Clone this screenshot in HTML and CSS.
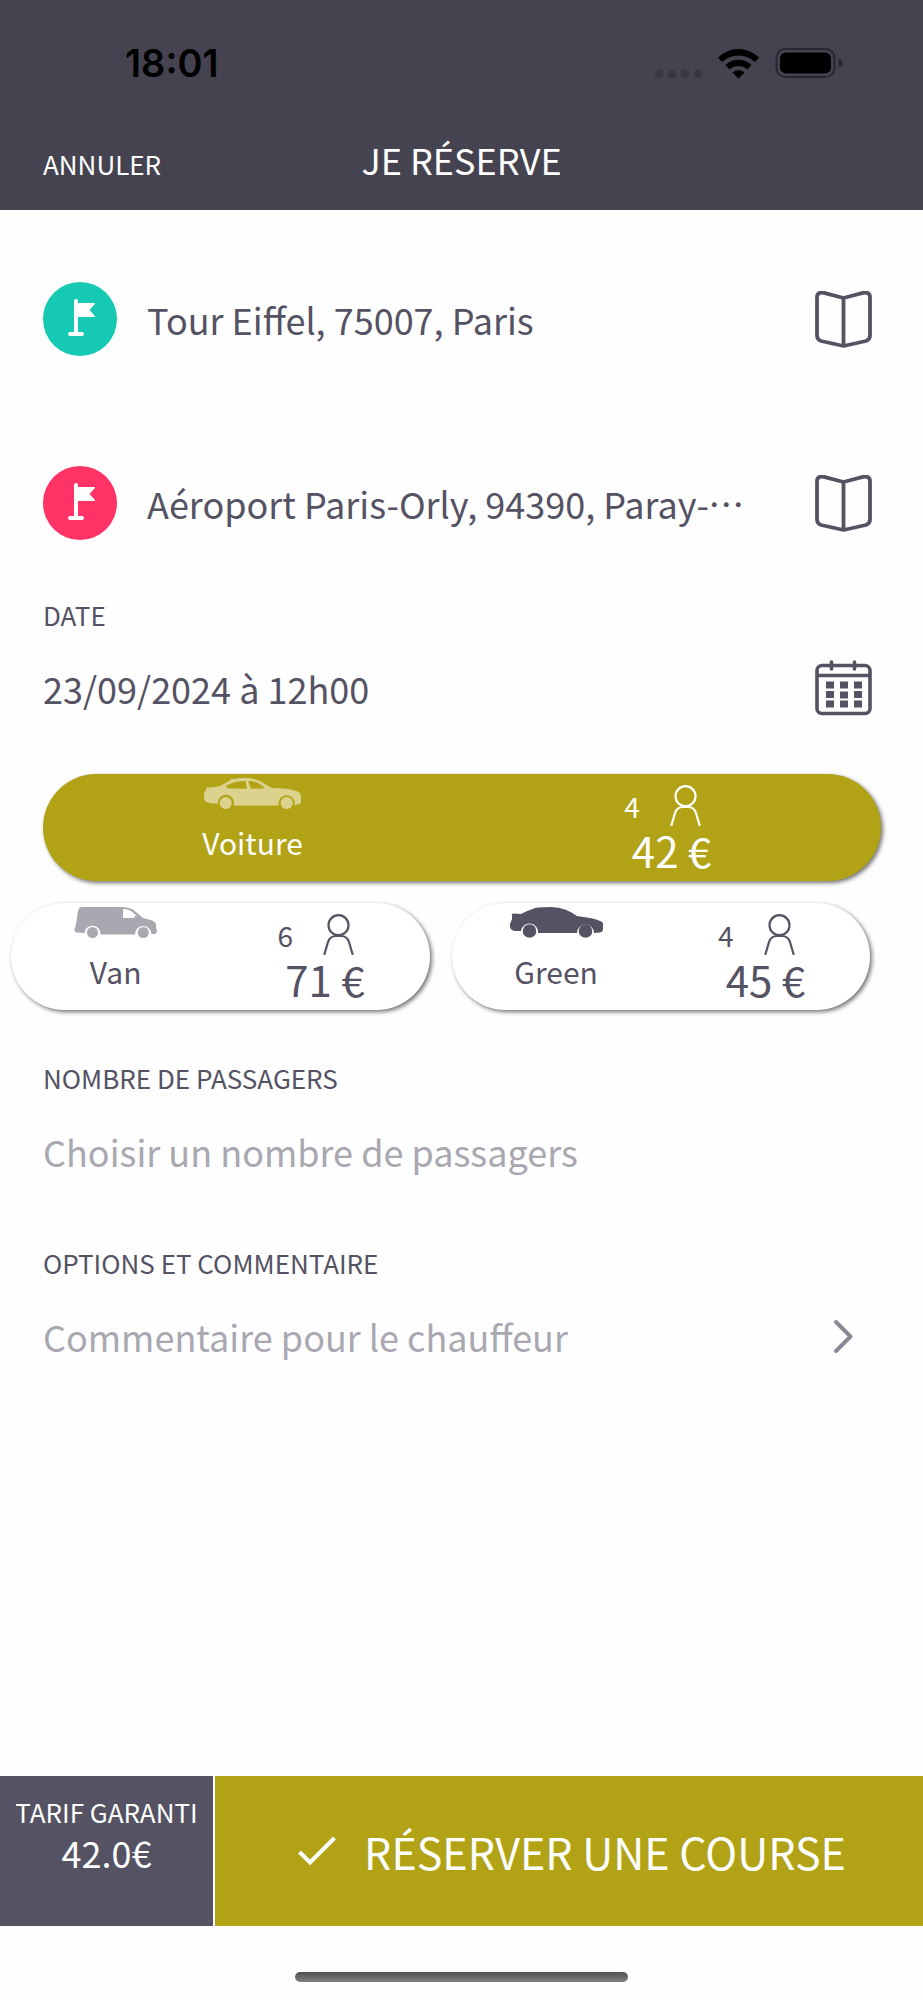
FILE: index.html
```html
<!DOCTYPE html>
<html lang="fr">
<head>
<meta charset="utf-8">
<meta name="viewport" content="width=device-width, initial-scale=1">
<title>Je réserve</title>
<link rel="stylesheet" href="styles.css">
</head>
<body>
<svg class="sprite" aria-hidden="true">
  <symbol id="flag" viewBox="0 0 74 74">
    <path fill="currentColor" d="M31 19q0-2 2-2t2 2v2h16.500q1 0.500 0 1.500l-5 5.500 5 5.500q1 1.500 0 1.500H35v15h4q2 0 2 2t-2 2H27q-2 0-2-2t2-2h4z"/>
  </symbol>
  <symbol id="book" viewBox="0 0 57 57">
    <path fill="none" stroke="currentColor" stroke-width="3.800" stroke-linejoin="round" d="M28.500 7 9 1.900Q2 .5 2 6.500v38q0 4 4 5.500l22.500 5 22.500-5q4-1.500 4-5.500V6.500q0-6-7-4.600zV55"/>
  </symbol>
  <symbol id="person" viewBox="0 0 31 41">
    <g fill="none" stroke="currentColor" stroke-width="2.200" stroke-linecap="round">
      <circle cx="15.500" cy="11.200" r="10"/>
      <path d="M1.500 40 5 28q2-6 8-6h5q6 0 8 6l3.500 12"/>
    </g>
  </symbol>
</svg>

<header class="header">
  <div class="status">
    <span class="time">18:01</span>
    <svg class="status-icons" viewBox="0 0 190 32" aria-hidden="true">
      <g fill="#383742"><rect x="0" y="23" width="8" height="8" rx="3"/><rect x="13" y="23" width="8" height="8" rx="3"/><rect x="26" y="23" width="8" height="8" rx="3"/><rect x="39" y="23" width="8" height="8" rx="3"/></g>
      <path d="M63 10.500a29 29 0 0 1 41 0l-4 4.500a24 24 0 0 0-33 0zM70.500 18a19 19 0 0 1 26 0l-4.200 4.500a13 13 0 0 0-17.600 0zM77.500 25.500a9 9 0 0 1 12 0L83.500 31.500z"/>
      <rect x="121.500" y="2" width="58" height="28" rx="9" fill="none" stroke="#282730" stroke-width="2"/>
      <rect x="125" y="5.500" width="51" height="21" rx="6"/>
      <path fill="#282730" d="M183.500 11.500q4 1 4 4.500t-4 4.500z"/>
    </svg>
  </div>
  <nav class="nav">
    <button class="cancel" type="button">ANNULER</button>
    <h1 class="title">JE RÉSERVE</h1>
  </nav>
</header>

<main class="main">
  <div class="row">
    <span class="badge badge-from"><svg viewBox="0 0 74 74" aria-hidden="true"><use href="#flag"/></svg></span>
    <input class="value" type="text" aria-label="Adresse de départ" value="Tour Eiffel, 75007, Paris">
    <button class="icon-btn" type="button" aria-label="Carnet d'adresses, départ"><svg class="icon" viewBox="0 0 57 57"><use href="#book"/></svg></button>
  </div>
  <div class="row row-to">
    <span class="badge badge-to"><svg viewBox="0 0 74 74" aria-hidden="true"><use href="#flag"/></svg></span>
    <input class="value" type="text" aria-label="Adresse d'arrivée" value="Aéroport Paris-Orly, 94390, Paray-Vieille-Poste">
    <button class="icon-btn" type="button" aria-label="Carnet d'adresses, arrivée"><svg class="icon" viewBox="0 0 57 57"><use href="#book"/></svg></button>
  </div>

  <div class="field">
    <label class="label" for="date">DATE</label>
    <div class="row">
      <input class="value" id="date" type="text" value="23/09/2024 à 12h00">
      <button class="icon-btn" type="button" aria-label="Ouvrir le calendrier">
        <svg class="icon" viewBox="0 0 57 57">
          <g fill="none" stroke="currentColor" stroke-width="3.600" stroke-linecap="round"><rect x="2" y="5.500" width="53" height="48" rx="5"/><path d="M3 15.500h51M16.500 2v7M39.500 2v7"/></g>
          <path fill="currentColor" d="M11 21.500h8v7h-8zM25 21.500h8v7h-8zM39 21.500h8v7h-8zM11 31h8v7h-8zM25 31.500h8v7h-8zM39 31h8v7h-8zM11 40.500h8v7h-8zM25 40.500h8v7h-8zM39 40.500h8v7h-8z"/>
        </svg>
      </button>
    </div>
  </div>

  <div class="vehicles" role="radiogroup" aria-label="Type de véhicule">
    <label class="card">
      <input class="radio" type="radio" name="vehicle" checked>
      <span class="kind">
        <svg class="car car-sedan" viewBox="0 0 97 31" aria-hidden="true">
          <path fill-rule="evenodd" d="M2 24Q0 22 0 19V15L2 12 2 9.500Q9 9.500 16 8L26 2.500 27 1 30 1Q35 0 41 0 50 0 56 3L68 10 80 10.500Q92 12 96 15L97 18V24L96 26 91 27 90.500 27A8 8 0 1 0 75 27.500H29.500A8 8 0 1 0 14 25.500L8 25.500zM22 8Q22 10 27 10.500L43 10.800 41.500 3Q30 3 22 8zM44 3 47 10.800 61 10.500Q55 3 44 3z"/>
          <circle cx="21.700" cy="25" r="6"/><circle cx="82.700" cy="25" r="6"/>
        </svg>
        <span class="name">Voiture</span>
      </span>
      <span class="offer">
        <span class="seats">4 <svg class="person" viewBox="0 0 31 41" aria-hidden="true"><use href="#person"/></svg></span>
        <span class="price">42 €</span>
      </span>
    </label>
    <div class="pair">
      <label class="card">
        <input class="radio" type="radio" name="vehicle">
        <span class="kind">
          <svg class="car car-van" viewBox="0 0 83 31" aria-hidden="true">
            <path fill-rule="evenodd" d="M4 4Q5 0 8 0H49Q54 0 59 2.500L69 11 77 13Q82 15 82 18V22L83 23V25L81 27 77.500 27A8 8 0 1 0 61 27.500H26.500A8 8 0 1 0 10.500 26L2 25.500 0 23 1 21 2 17zM49 2V11L60 11 61 9 63 9 57 4Q54 2 49 2z"/>
            <circle cx="18.500" cy="25.500" r="5.500"/><circle cx="69.300" cy="25.500" r="5.500"/>
          </svg>
          <span class="name">Van</span>
        </span>
        <span class="offer">
          <span class="seats">6 <svg class="person" viewBox="0 0 31 41" aria-hidden="true"><use href="#person"/></svg></span>
          <span class="price">71 €</span>
        </span>
      </label>
      <label class="card">
        <input class="radio" type="radio" name="vehicle">
        <span class="kind">
          <svg class="car car-green" viewBox="0 0 93 31" aria-hidden="true">
            <path d="M2 8Q1 7 3 6.500L11 7Q23 1 28 .5 34 0 41 0 49 0 55 2.500 62 5 67 9L80 11Q90 13 93 16V23Q92 25 90 25.500L84 26A8.500 8.500 0 1 0 67 26H28A8.500 8.500 0 1 0 11 24H6Q1 24 0 20V17L2 12z"/>
            <circle cx="19.500" cy="24" r="6.800"/><circle cx="75.500" cy="24" r="6.800"/>
          </svg>
          <span class="name">Green</span>
        </span>
        <span class="offer">
          <span class="seats">4 <svg class="person" viewBox="0 0 31 41" aria-hidden="true"><use href="#person"/></svg></span>
          <span class="price">45 €</span>
        </span>
      </label>
    </div>
  </div>

  <div class="field">
    <label class="label" for="passengers">NOMBRE DE PASSAGERS</label>
    <div class="row">
      <select class="value empty" id="passengers">
        <option>Choisir un nombre de passagers</option>
      </select>
    </div>
  </div>
  <div class="field">
    <label class="label" for="comment">OPTIONS ET COMMENTAIRE</label>
    <div class="row">
      <input class="value" id="comment" type="text" placeholder="Commentaire pour le chauffeur">
      <button class="icon-btn" type="button" aria-label="Ouvrir les options">
        <svg class="icon chevron" viewBox="0 0 57 57"><path fill="none" stroke="currentColor" stroke-width="4" stroke-linecap="round" stroke-linejoin="round" d="M21 14 35.500 28.500 21 43"/></svg>
      </button>
    </div>
  </div>
</main>

<footer class="footer">
  <div class="fare">
    <span class="fare-label">TARIF GARANTI</span>
    <span class="fare-value">42.0€</span>
  </div>
  <button class="book" type="button">
    <svg class="check" viewBox="0 0 38 30" aria-hidden="true"><path fill="none" stroke="currentColor" stroke-width="4" d="M1.500 16 12 26.500 36.500 2"/></svg>
    RÉSERVER UNE COURSE
  </button>
</footer>
<div class="home"><span class="home-bar"></span></div>
</body>
</html>
```

FILE: styles.css
```css
* {
  box-sizing: border-box;
}

body {
  margin: 0;
  min-height: 100vh;
  display: flex;
  flex-direction: column;
  background: #fefefe;
  color: #545263;
  font-family: "Noto Sans CJK JP", "Noto Sans", sans-serif;
  font-size: 36px;
}

button,
input,
select {
  margin: 0;
  padding: 0;
  border: 0;
  background: none;
  color: inherit;
  font: inherit;
}

.sprite {
  display: none;
}

.header {
  padding: 40px 43px 24px;
  background: #454350;
  color: #fff;
}

.status {
  display: flex;
  align-items: center;
  justify-content: space-between;
  height: 46px;
  margin-bottom: 46px;
  padding: 0 35px 0 82px;
  color: #000;
}

.time {
  font: 600 38px/46px Inter, sans-serif;
}

.status-icons {
  width: 190px;
  height: 32px;
}

.nav {
  display: grid;
  grid-template-columns: 1fr auto 1fr;
  align-items: baseline;
}

.cancel {
  justify-self: start;
  font-size: 26px;
  line-height: 40px;
}

.title {
  margin: 0;
  font-size: 36px;
  font-weight: 400;
  line-height: 54px;
}

.main {
  flex: 1;
  padding: 72px 42px 72px 43px;
}

.row {
  display: flex;
  align-items: center;
  height: 74px;
}

.row-to {
  margin-top: 110px;
}

.badge {
  flex: none;
  width: 74px;
  height: 74px;
  margin-right: 30px;
  border-radius: 50%;
  color: #fff;
}

.badge svg {
  display: block;
}

.badge-from {
  background: #16c9b3;
}

.badge-to {
  background: #ff3366;
}

.value {
  flex: 1;
  min-width: 0;
  height: 54px;
  line-height: 54px;
  text-overflow: ellipsis;
  appearance: none;
}

.value::placeholder,
.empty {
  color: #a9a8b1;
  opacity: 1;
}

.icon-btn {
  flex: none;
  margin: 0 9px 0 52px;
}

.icon {
  display: block;
  width: 57px;
  height: 57px;
}

.chevron {
  color: #8a8995;
}

.field {
  margin-top: 55px;
}

.label {
  display: block;
  margin-bottom: 16px;
  font-size: 26px;
  line-height: 40px;
}

.vehicles {
  margin: 49px 0 48px;
}

.vehicles + .field {
  margin-top: 0;
}

.pair {
  display: flex;
  gap: 22px;
  margin: 22px 0 0 -43px;
  padding: 0 11px;
}

.card {
  flex: 1;
  display: grid;
  grid-template-columns: 1fr 1fr;
  height: 107px;
  border-radius: 54px;
  background: #fff;
  box-shadow: 2px 2px 4px rgba(0, 0, 0, 0.55);
}

.card:has(:checked) {
  background: #b2a316;
  color: #fff;
}

.radio {
  position: absolute;
  appearance: none;
}

.kind,
.offer {
  display: flex;
  flex-direction: column;
  align-items: center;
}

.kind {
  padding-top: 4px;
  gap: 9px;
}

.offer {
  padding-top: 11px;
}

.car {
  height: 31px;
  fill: currentColor;
}

.car-sedan {
  width: 97px;
  fill: #dbd38d;
}

.car-van {
  width: 83px;
  fill: #a9a8b1;
}

.car-green {
  width: 93px;
}

.name {
  font-size: 30px;
  line-height: 48px;
}

.seats {
  display: flex;
  align-items: center;
  gap: 12px;
  height: 41px;
  font-size: 28px;
}

.person {
  width: 67px;
  height: 41px;
}

.price {
  font-size: 42px;
  line-height: 48px;
}

.footer {
  display: flex;
  gap: 2px;
  color: #fff;
}

.fare {
  flex: none;
  display: flex;
  flex-direction: column;
  align-items: center;
  width: 213px;
  padding-top: 16px;
  background: #545263;
  line-height: 40px;
}

.fare-label {
  font-size: 26px;
}

.book {
  flex: 1;
  display: flex;
  align-items: center;
  justify-content: center;
  gap: 28px;
  min-height: 150px;
  padding-left: 6px;
  background: #b2a316;
  font-size: 43px;
}

.check {
  width: 38px;
  height: 30px;
}

.home {
  display: flex;
  justify-content: center;
  padding: 46px 0 18px;
}

.home-bar {
  width: 36%;
  height: 10px;
  border-radius: 5px;
  background: linear-gradient(#505050, #808080);
}
```
